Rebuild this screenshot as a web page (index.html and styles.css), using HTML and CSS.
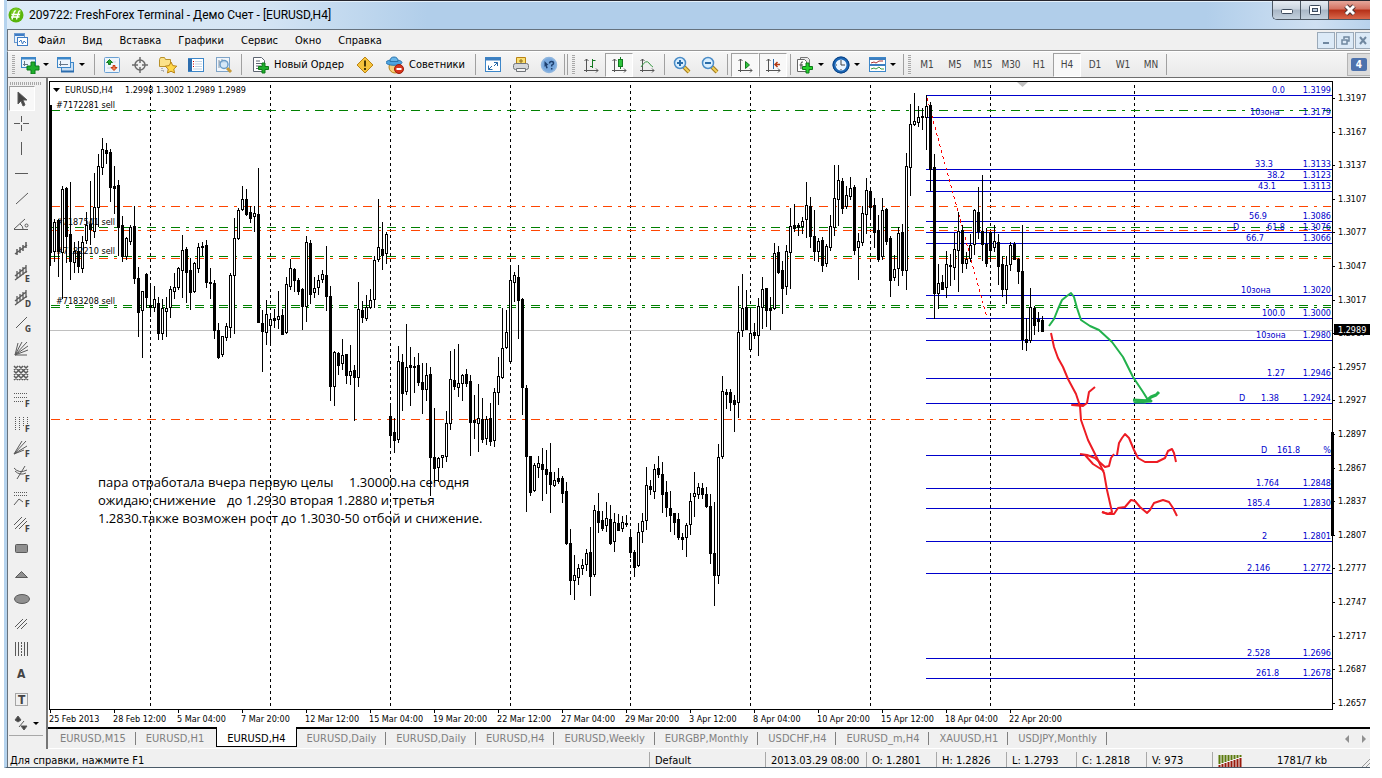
FILE: index.html
```html
<!DOCTYPE html>
<html lang="ru">
<head>
    <meta charset="UTF-8">
    <meta name="viewport" content="width=device-width, initial-scale=1.0">
    <title>FreshForex Terminal</title>
    <link rel="stylesheet" href="styles.css">
</head>
<body>
<div class="window">
    <header class="titlebar">
        <svg class="logo" width="16" height="16" viewBox="0 0 16 16"><circle cx="8" cy="8" r="7.5" fill="#58b50c"/><circle cx="8" cy="6" r="5" fill="#8bd62f" opacity=".6"/><path d="M4 12.500l2-7q.5-2 2-1.500M8.500 12.500l2-7q.5-2 2-1.500M3.500 7.500h8.500M3 10h8.500" stroke="#fff" stroke-width="1.300" fill="none"/></svg>
        <span class="title">209722: FreshForex Terminal - Демо Счет - [EURUSD,H4]</span>
        <div class="win-buttons">
            <button class="win-btn" aria-label="Свернуть"><svg width="14" height="12"><rect x="1.500" y="5.500" width="11" height="4" rx="1" fill="#fff" stroke="#3d4a5c"/></svg></button>
            <button class="win-btn" aria-label="Развернуть"><svg width="14" height="12"><rect x="1.500" y="1.500" width="11" height="9" rx="1" fill="#fff" stroke="#3d4a5c"/><rect x="4.500" y="4.500" width="5" height="3" fill="#b8c9dc" stroke="#3d4a5c"/></svg></button>
            <button class="win-btn close" aria-label="Закрыть"><svg width="14" height="12"><path d="M3 2l8 8M11 2l-8 8" stroke="#4b3535" stroke-width="5"/><path d="M3 2l8 8M11 2l-8 8" stroke="#fff" stroke-width="3"/></svg></button>
        </div>
    </header>

    <nav class="menubar">
        <svg width="16" height="16" viewBox="0 0 16 16"><rect x="1.500" y="1.500" width="10" height="9" fill="#e8f2fb" stroke="#6c9bd0"/><path d="M2 3h9" stroke="#3f7cc4" stroke-width="2"/><rect x="4.500" y="5.500" width="10" height="8" fill="#fff" stroke="#3f7cc4"/><path d="M6 10l2-2 1.500 4 1.500-3 2 2" stroke="#3f7cc4" fill="none"/></svg>
        <button>Файл</button>
        <button>Вид</button>
        <button>Вставка</button>
        <button>Графики</button>
        <button>Сервис</button>
        <button>Окно</button>
        <button>Справка</button>
        <div class="mdi-buttons">
            <button aria-label="Свернуть окно"><svg width="11" height="11"><path d="M2 8h6" stroke="#7088a0" stroke-width="2"/></svg></button>
            <button aria-label="Восстановить окно"><svg width="11" height="11"><path d="M4 4V2h5v4H7M2 5h5v4H2z" stroke="#7088a0" stroke-width="1.500" fill="none"/></svg></button>
            <button aria-label="Закрыть окно"><svg width="11" height="11"><path d="M2 2l6 7M8 2l-6 7" stroke="#7088a0" stroke-width="2"/></svg></button>
        </div>
    </nav>

    <div class="toolbar">
        <i class="grip"></i>
        <button class="split" aria-label="Новый график"><svg width="20" height="18"><rect x="1.500" y="1.500" width="14" height="10" fill="#eef6fd" stroke="#3d87c9"/><path d="M1 2.500h15" stroke="#3d87c9" stroke-width="2"/><path d="M4.500 5v5M3 8.500h5" stroke="#67788a" fill="none"/><path d="M11 6h4v4h4v4h-4v4h-4v-4H7v-4h4z" fill="#1fae2c" stroke="#0d7a18"/></svg></button>
        <button class="split" aria-label="Профили"><svg width="20" height="18"><rect x="5.500" y="6.500" width="12" height="9" fill="#c9dff3" stroke="#3d87c9"/><path d="M5 15.500h13" stroke="#2d6dae" stroke-width="2"/><rect x="1.500" y="1.500" width="13" height="10" fill="#eef6fd" stroke="#3d87c9"/><path d="M1 2.500h14" stroke="#3d87c9" stroke-width="2"/><path d="M4.500 5v5M3 8.500h9" stroke="#67788a"/></svg></button>
        <i class="sep"></i>
        <button aria-label="Обзор рынка"><svg width="16" height="16"><rect x=".5" y=".5" width="15" height="15" rx="1" fill="#eef5fb" stroke="#6aa0d4"/><path d="M3 5h9M3 11h10" stroke="#c8d8e8"/><path d="M2.500 5.500L5.500 2.500 8.500 5.500h-2v2h-2v-2z" fill="#22aa33" stroke="#137a20"/><path d="M7 10.500L10 13.500 13 10.500h-2V8.500H9v2z" fill="#f08050" stroke="#c43a12"/></svg></button>
        <button aria-label="Окно данных"><svg width="16" height="16"><circle cx="8" cy="8" r="5" fill="none" stroke="#6c6c6c" stroke-width="1.500"/><path d="M8 0v6M8 10v6M0 8h6M10 8h6" stroke="#6c6c6c" stroke-width="1.500"/></svg></button>
        <button aria-label="Навигатор"><svg width="20" height="18"><path d="M1.500 3.500l1-2h4l1 2h5v7h-11z" fill="#fbe28a" stroke="#b8912a"/><path d="M4 12v3h3" stroke="#777" stroke-dasharray="1 1" fill="none"/><path d="M13 6l1.800 3.600 4 .6-3 2.800.7 4-3.500-1.800L9.500 17l.7-4-3-2.800 4-.6z" fill="#ffd84a" stroke="#b98314"/></svg></button>
        <button aria-label="Терминал"><svg width="16" height="16"><rect x=".5" y="1.500" width="15" height="13" fill="#fff" stroke="#3d87c9"/><path d="M2 2v12" stroke="#2d6dae" stroke-width="4"/><path d="M5 4.500h1M5 7h1M5 9.500h1" stroke="#c00"/><path d="M7 4.500h7M7 7h7M7 9.500h7M5 12h9" stroke="#c3d3e4"/></svg></button>
        <button aria-label="Тестер стратегий"><svg width="18" height="18"><rect x="1.500" y="1.500" width="13" height="14" fill="#f1f6fb" stroke="#7fa4c8"/><path d="M4 4v8M4 6h9M7 3v4" stroke="#8897a6" fill="none"/><path d="M12 12l4 4" stroke="#c79a3a" stroke-width="3"/><circle cx="9" cy="8.500" r="4" fill="#cfe5f8" fill-opacity=".8" stroke="#6b9cc8" stroke-width="1.500"/></svg></button>
        <i class="sep"></i>
        <button class="labelled"><svg width="17" height="18"><path d="M1.500 1.500h8l3 3v11h-11z" fill="#fff" stroke="#5c6470"/><path d="M4 5h4M4 7.500h6M4 10h5M4 12.500h3" stroke="#5c6470"/><path d="M10 7h3v3.500h3.500v3H13V17h-3v-3.500H6.500v-3H10z" fill="#1fae2c" stroke="#0d7a18"/></svg>Новый Ордер</button>
        <button aria-label="MetaEditor"><svg width="18" height="18"><path d="M9 1l8 8-8 8-8-8z" fill="#f6c33c" stroke="#b98314" stroke-linejoin="round"/><path d="M9 4.500v6M9 12v2" stroke="#4b3905" stroke-width="2"/></svg></button>
        <button class="labelled"><svg width="18" height="18"><ellipse cx="9" cy="11" rx="6" ry="6" fill="#f6cf7a" stroke="#b98314"/><ellipse cx="8" cy="6.500" rx="8" ry="2.800" fill="#4ea3df" stroke="#2a74ad"/><path d="M4 5.500q0-4.500 4-4.500t4 4.500z" fill="#68b6ea" stroke="#2a74ad"/><circle cx="13" cy="13" r="4.500" fill="#d8341c" stroke="#9c1f0d"/><path d="M10.500 13h5" stroke="#fff" stroke-width="2"/></svg>Советники</button>
        <i class="sep"></i>
        <button aria-label="Во весь экран"><svg width="16" height="15"><rect x=".5" y=".5" width="15" height="14" fill="#fff" stroke="#3d87c9"/><path d="M0 2h16" stroke="#3d7fc0" stroke-width="3"/><path d="M9 5.500h3.500v3.500M12.500 5.500L9 9M3.500 8.500v4h4M3.500 12.500L7 9" stroke="#2869a8" fill="none"/></svg></button>
        <button aria-label="Печать"><svg width="18" height="17"><path d="M4.500 8V1.500h9V8" fill="#fbe072" stroke="#b98314"/><path d="M9 3v4M7 5h4" stroke="#8a6a1a"/><rect x="1.500" y="7.500" width="15" height="6" rx="2" fill="#d5d7da" stroke="#707479"/><path d="M4.500 12.500h9v3h-9z" fill="#f3f3f3" stroke="#707479"/></svg></button>
        <button aria-label="Помощь"><svg width="18" height="18"><circle cx="9" cy="9" r="7.500" fill="#78a8dd" stroke="#8fb6df" stroke-width="1.500"/><path d="M4.500 5l4 4-1.700.2 1 2.800-1.500.5-1-2.700L4.500 11z" fill="#1d3f6e"/><path d="M9.500 7.500q0-2 2-2t2 1.700q0 1.300-1.800 2v1.300M11.700 12v1.500" stroke="#1d3f6e" stroke-width="1.500" fill="none"/></svg></button>
        <i class="sep tight"></i><i class="sep tight"></i>
        <i class="grip"></i>
        <button aria-label="Бары"><svg width="16" height="16"><path d="M3.500 2v13M1 13.500h14M1.500 4l2-2 2 2M13 11.500l2 2-2 2" stroke="#555" fill="none"/><path d="M9.500 2v9M9.500 3.500h3M7 9.500h2" stroke="#137a20" fill="none"/></svg></button>
        <button class="pressed" aria-label="Японские свечи"><svg width="16" height="16"><path d="M3.500 2v13M1 13.500h14M1.500 4l2-2 2 2M13 11.500l2 2-2 2" stroke="#555" fill="none"/><path d="M9.500 0v12" stroke="#137a20"/><rect x="7.500" y="2.500" width="4" height="7" fill="#2fc43d" stroke="#137a20"/></svg></button>
        <button aria-label="Линия"><svg width="16" height="16"><path d="M3.500 2v13M1 13.500h14M1.500 4l2-2 2 2M13 11.500l2 2-2 2" stroke="#555" fill="none"/><path d="M2 10q5-8 8-4t4 4" stroke="#3a9a45" fill="none"/></svg></button>
        <i class="sep"></i>
        <button aria-label="Увеличить"><svg width="18" height="18"><path d="M11 11l5 5" stroke="#a37b1c" stroke-width="4"/><path d="M11 11l5 5" stroke="#f0cf58" stroke-width="2"/><circle cx="7" cy="7" r="5.500" fill="#d9efff" stroke="#4a8cc7" stroke-width="1.500"/><path d="M4 7h6M7 4v6" stroke="#2a6da9" stroke-width="2"/></svg></button>
        <button aria-label="Уменьшить"><svg width="18" height="18"><path d="M11 11l5 5" stroke="#a37b1c" stroke-width="4"/><path d="M11 11l5 5" stroke="#f0cf58" stroke-width="2"/><circle cx="7" cy="7" r="5.500" fill="#d9efff" stroke="#4a8cc7" stroke-width="1.500"/><path d="M4 7h6" stroke="#2a6da9" stroke-width="2"/></svg></button>
        <i class="sep"></i>
        <button class="pressed" aria-label="Автопрокрутка"><svg width="16" height="16"><path d="M3.500 2v13M1 13.500h14M1.500 4l2-2 2 2M13 11.500l2 2-2 2" stroke="#555" fill="none"/><path d="M8.500 4.500v7l4-3.500z" fill="#2fc43d" stroke="#137a20"/></svg></button>
        <button class="pressed" aria-label="Сдвиг графика"><svg width="16" height="16"><path d="M3.500 2v13M1 13.500h14M1.500 4l2-2 2 2M13 11.500l2 2-2 2" stroke="#555" fill="none"/><path d="M8.500 2v10" stroke="#2869a8"/><path d="M15 7.500H10M12.500 5L10 7.500l2.500 2.500" stroke="#b33a12" stroke-width="1.500" fill="none"/></svg></button>
        <i class="sep"></i>
        <button class="split" aria-label="Индикаторы"><svg width="20" height="18"><path d="M5.500 1.500h7l2 2v11h-9z" fill="#e9e9e9" stroke="#777"/><path d="M2.500 3.500h7l2 2v10h-9z" fill="#fff" stroke="#666"/><path d="M8 6q-2-.5-2 1.500V13M4.500 9H8" stroke="#444" fill="none"/><path d="M11 7h3v3.500h3.500v3H14V17h-3v-3.500H7.500v-3H11z" fill="#25d02c" stroke="#0d7a18"/></svg></button>
        <button class="split" aria-label="Периоды"><svg width="20" height="18"><circle cx="10" cy="9" r="7" fill="#eaf5ff" stroke="#1b66b5" stroke-width="3"/><circle cx="10" cy="9" r="8" fill="none" stroke="#0d4384"/><path d="M10 4v5h4M10 13v1M5 9h1" stroke="#444" fill="none"/></svg></button>
        <button class="split" aria-label="Шаблоны"><svg width="20" height="15"><rect x="2.500" y=".5" width="16" height="14" fill="#fff" stroke="#3d87c9"/><path d="M2 2h17M3 8h15" stroke="#3d7fc0" stroke-width="2"/><path d="M4 6l3-1 2 1 3-2 4 0" stroke="#a33" fill="none"/><path d="M4 12l3-1 2 1 3-2 2 2h3" stroke="#3a9a45" fill="none"/></svg></button>
        <i class="sep tight"></i>
        <i class="grip"></i>
        <button class="period">M1</button>
        <button class="period">M5</button>
        <button class="period">M15</button>
        <button class="period">M30</button>
        <button class="period">H1</button>
        <button class="period pressed">H4</button>
        <button class="period">D1</button>
        <button class="period">W1</button>
        <button class="period">MN</button>
        <i class="sep tight"></i>
        <button class="messages"><span>4</span></button>
    </div>

    <div class="main">
        <aside class="tools" id="tools"><i class="grip-h"></i></aside>
        <div class="workspace">
            <svg class="chart" id="chart" viewBox="48 78 1322 649"></svg>
            <div class="tabs">
                <button class="tab">EURUSD,M15</button>
                <button class="tab">EURUSD,H1</button>
                <button class="tab active">EURUSD,H4</button>
                <button class="tab">EURUSD,Daily</button>
                <button class="tab">EURUSD,Daily</button>
                <button class="tab">EURUSD,H4</button>
                <button class="tab">EURUSD,Weekly</button>
                <button class="tab">EURGBP,Monthly</button>
                <button class="tab">USDCHF,H4</button>
                <button class="tab">EURUSD_m,H4</button>
                <button class="tab">XAUUSD,H1</button>
                <button class="tab">USDJPY,Monthly</button>
                <div class="tab-scroll">
                    <button aria-label="Назад"><svg width="4" height="8"><path d="M4 0v8L0 4z" fill="#909090"/></svg></button>
                    <button aria-label="Вперед"><svg width="4" height="8"><path d="M0 0v8l4-4z" fill="#909090"/></svg></button>
                </div>
            </div>
        </div>
    </div>

    <footer class="status">
        <span class="help">Для справки, нажмите F1</span>
        <span class="cell profile">Default</span>
        <span class="cell date">2013.03.29 08:00</span>
        <span class="cell">O: 1.2801</span>
        <span class="cell">H: 1.2826</span>
        <span class="cell">L: 1.2793</span>
        <span class="cell">C: 1.2818</span>
        <span class="cell volume">V: 973</span>
        <span class="cell traffic">
            <svg width="24" height="12"><path d="M1.500 0v9M4.500 0v8M7.500 0v7M10.500 0v6M13.500 0v5M16.500 0v4M19.500 0v3M22.500 0v2" stroke="#5a7a0c" stroke-width="2"/><path d="M1.500 12v-2M4.500 12V9M7.500 12V8M10.500 12V7M13.500 12V6M16.500 12V5M19.500 12V4M22.500 12V3" stroke="#9a1a0c" stroke-width="2"/></svg>
            <span>1781/7 kb</span>
            <svg width="8" height="10"><path d="M0 10l8-8M4 10l4-4" stroke="#999"/></svg>
        </span>
    </footer>
</div>
<script src="script.js"></script>
</body>
</html>
```
FILE: styles.css
```css
* {
    box-sizing: border-box;
}
body {
    margin: 0;
    background: #fff;
    font-family: "DejaVu Sans Condensed", "Noto Sans", sans-serif;
    font-size: 11px;
    color: #000;
}
button {
    font: inherit;
    color: inherit;
    background: none;
    border: 0;
    padding: 0;
    display: flex;
    align-items: center;
    justify-content: center;
}
.window {
    margin: 0 12px 10px 4px;
    border-left: 3px solid #b5d3ee;
    background: #f0f0f0;
    border-bottom: 1px solid #4a5a68;
    overflow: hidden;
}

/* title */
.titlebar {
    height: 30px;
    display: flex;
    align-items: center;
    gap: 5px;
    border-top: 1px solid #26262e;
    border-bottom: 1px solid #66727e;
    box-shadow: inset 0 1px #e4f0fa;
    background: linear-gradient(90deg, #dcebf8 0, #d5e5f4 250px, #b1ceea 420px, #b1ceea 88%, #cfe0f2 96%, #b8d2ec);
}
.logo {
    margin-left: 1px;
}
.title {
    font-family: Roboto, "Noto Sans", sans-serif;
    font-size: 12px;
}
.win-buttons {
    margin-left: auto;
    align-self: flex-start;
    display: flex;
    border: 1px solid #4c5763;
    border-top: 0;
    border-right: 0;
    border-radius: 0 0 0 5px;
    overflow: hidden;
}
.win-btn {
    width: 28px;
    height: 18px;
    border-right: 1px solid #4c5763;
    background: linear-gradient(#e6ecf3 0, #c9d3de 45%, #a9b7c6 50%, #c3d0dd);
}
.win-btn.close {
    width: 41px;
    border-right: 0;
    background: linear-gradient(#e5a79b 0, #d3705f 45%, #b52f17 50%, #d9674a);
}

/* menu */
.menubar {
    height: 21px;
    display: flex;
    align-items: center;
    gap: 17px;
    padding-left: 5px;
    border-left: 1px solid #66727e;
    border-bottom: 1px solid #989898;
}
.menubar > svg {
    margin-right: -8px;
}
.mdi-buttons {
    margin-left: auto;
    display: flex;
    gap: 1px;
}
.mdi-buttons button {
    width: 18px;
    height: 17px;
    background: #dceaf7;
    border: 1px solid #9aa9b8;
}
.mdi-buttons button:last-child {
    width: 15px;
    border-right: 0;
}

/* toolbar */
.toolbar {
    height: 27px;
    display: flex;
    align-items: center;
    border-left: 1px solid #66727e;
    border-top: 1px solid #fff;
    border-bottom: 1px solid #6f6f6f;
    background: linear-gradient(#f6f6f6, #e9e9e9);
}
.toolbar button {
    width: 28px;
    height: 24px;
    flex: none;
}
.toolbar .split {
    width: 36px;
    justify-content: flex-start;
    padding-left: 1px;
    gap: 3px;
}
.toolbar .split::after {
    content: "";
    border: 3px solid transparent;
    border-top-color: #000;
    border-bottom: 0;
}
.toolbar .labelled {
    width: auto;
    padding: 0 7px;
    gap: 5px;
}
.toolbar .period {
    color: #444;
    font-size: 10px;
}
.toolbar .pressed,
.tools .pressed {
    background: #f8f8f8;
    border: 1px solid #a0a0a0;
    border-right-color: #fff;
    border-bottom-color: #fff;
}
.toolbar .messages {
    width: 23px;
    height: 23px;
    margin-left: auto;
    background: #dcdcdc;
    border: 1px solid #b4b4b4;
    border-right: 0;
}
.messages span {
    width: 16px;
    height: 13px;
    line-height: 13px;
    background: #4d72ad;
    color: #fff;
    font-weight: bold;
    font-size: 10px;
    border-radius: 2px;
}
.grip {
    width: 3px;
    height: 20px;
    margin: 0 2px 0 3px;
    background: repeating-linear-gradient(#a8a8a8 0 1px, #f0f0f0 1px 2px);
}
.toolbar > .grip:first-child {
    margin: 0 4px;
}
.sep {
    width: 1px;
    height: 21px;
    margin: 0 3px;
    background: #a0a0a0;
}
.sep.tight {
    margin: 0 1px;
}

/* left tools */
.main {
    display: flex;
    border-left: 1px solid #66727e;
}
.tools {
    flex: none;
    width: 40px;
    border-right: 2px solid #767676;
    padding-top: 4px;
}
.grip-h {
    display: block;
    width: 32px;
    height: 3px;
    margin: 0 0 1px 2px;
    background: repeating-linear-gradient(90deg, #a8a8a8 0 1px, #f0f0f0 1px 2px);
}
.tools button {
    width: 26px;
    height: 25px;
    margin-left: 1px;
}
.tools svg {
    stroke: #5a5a5a;
    fill: none;
}
.tools text {
    fill: #444;
    stroke: none;
    font-size: 8px;
    font-weight: bold;
}
.tools .letter {
    font-size: 12px;
}
.tools .wide {
    width: 34px;
    justify-content: flex-start;
    gap: 2px;
    padding-left: 4px;
    border-bottom: 1px solid #a8a8a8;
}
.tools .wide::after {
    content: "";
    border: 3px solid transparent;
    border-top-color: #000;
    border-bottom: 0;
}

/* chart */
.workspace {
    flex: 1;
    min-width: 0;
}
.chart {
    display: block;
    width: 100%;
    height: auto;
    background: #fff;
    font-size: 9px;
}
.crisp {
    shape-rendering: crispEdges;
}
.level-text {
    fill: #0000cc;
}
.note {
    font-family: "Open Sans", "Noto Sans", sans-serif;
    font-size: 13px;
}

/* tabs */
.tabs {
    height: 22px;
    display: flex;
    align-items: center;
    padding-left: 2px;
    border-top: 2px solid #000;
    border-bottom: 1px solid #fff;
}
.tab {
    height: 13px;
    padding: 0 9px 0 10px;
    color: #808080;
    border-right: 1px solid #808080;
    white-space: nowrap;
}
.tab:nth-child(2) {
    padding-right: 12px;
    border-right: 0;
}
.tab.active {
    height: 20px;
    align-self: flex-start;
    margin-top: -2px;
    padding: 3px 10px 0;
    color: #000;
    background: #fff;
    border: 1px solid #000;
    border-top: 0;
}
.tab-scroll {
    margin-left: auto;
    display: flex;
    gap: 13px;
    padding-right: 4px;
}

/* status bar */
.status {
    height: 18px;
    padding: 3px 0 0 2px;
    display: flex;
    border-left: 1px solid #66727e;
    line-height: 18px;
}
.help {
    flex: 1;
}
.cell {
    width: 70px;
    padding-left: 5px;
    border-left: 1px solid #a8a8a8;
    white-space: nowrap;
}
.cell.profile {
    width: 116px;
}
.cell.date {
    width: 101px;
}
.cell.volume {
    width: 66px;
}
.cell.traffic {
    width: 158px;
    display: flex;
    justify-content: space-between;
}
.traffic svg {
    align-self: flex-end;
}
```
FILE: script.js
```js
// candle = [high, open, close, low] on the chart's y scale (grows downwards)
const candles = [
    [105,105,252,265],[219,251,222,261],[219,220,251,276],[186,252,189,298],[187,188,236,262],[182,234,261,279],[242,262,251,272],[241,251,266,272],
    [236,268,242,272],[212,240,225,243],[181,224,229,244],[173,231,207,237],[154,207,166,226],[138,167,149,174],[143,150,153,163],[149,152,187,201],
    [166,186,188,213],[180,185,227,255],[216,225,256,261],[237,256,238,259],[225,241,227,244],[206,226,278,283],[267,278,312,336],[291,310,291,357],
    [273,274,297,307],[284,305,307,316],[286,307,299,311],[297,303,333,339],[299,333,308,339],[297,311,308,336],[286,307,289,317],[273,291,287,298],
    [267,287,268,289],[235,270,250,297],[247,249,272,302],[258,270,292,309],[262,291,263,292],[243,268,247,272],[242,246,247,255],[240,245,282,287],
    [268,282,283,298],[280,283,330,338],[323,330,357,358],[336,354,336,356],[323,337,326,340],[273,327,275,337],[218,275,238,333],[208,238,210,239],
    [186,209,199,210],[189,199,214,215],[206,212,218,222],[206,216,213,231],[168,214,322,322],[310,323,331,371],[300,332,314,344],[314,325,319,343],
    [309,318,320,327],[291,319,316,328],[309,315,334,334],[277,332,284,333],[259,286,268,289],[268,269,280,291],[278,280,291,294],[288,289,306,329],
    [236,306,242,321],[240,243,294,303],[277,292,288,297],[275,287,280,294],[270,279,274,282],[246,275,296,310],[286,296,386,400],[351,386,352,405],
    [352,353,365,374],[339,363,355,369],[354,354,375,383],[345,375,371,384],[365,370,377,420],[282,377,309,386],[301,310,317,322],[295,318,307,320],
    [289,307,300,308],[256,299,260,307],[199,259,247,261],[222,249,255,269],[232,253,234,263],[406,416,435,444],[418,432,440,452],[346,439,361,442],
    [354,362,393,410],[324,391,367,394],[347,365,367,405],[357,366,367,392],[353,365,382,385],[363,382,389,413],[363,389,375,400],[367,374,457,495],
    [408,457,468,482],[457,467,458,481],[455,457,455,467],[411,456,423,461],[351,423,379,429],[349,380,386,389],[344,387,383,396],[374,383,375,400],
    [369,374,383,386],[375,381,422,455],[395,420,422,438],[384,423,418,451],[398,419,439,442],[416,438,419,444],[403,418,441,445],[388,440,392,446],
    [357,392,376,404],[308,377,348,378],[310,347,332,348],[265,361,280,361],[272,282,275,301],[265,277,300,338],[298,299,387,414],[385,388,456,511],
    [456,456,492,495],[463,490,465,491],[456,467,463,477],[448,464,469,500],[450,469,474,493],[443,472,484,512],[472,485,480,486],[468,478,481,483],
    [476,478,493,502],[482,491,543,544],[529,543,580,594],[555,580,575,599],[564,577,568,584],[559,568,565,574],[549,564,553,570],[527,552,576,595],
    [505,574,510,576],[493,511,522,532],[511,520,528,530],[502,525,518,531],[505,519,543,544],[513,541,522,551],[514,523,530,530],[516,528,522,531],
    [515,523,524,526],[529,537,552,557],[550,552,567,576],[523,565,532,566],[513,531,521,542],[467,520,485,529],[480,486,489,494],[464,491,469,498],
    [456,468,474,477],[462,474,494,512],[481,492,507,516],[491,508,515,531],[513,513,522,534],[513,519,537,539],[533,537,539,549],[523,537,525,556],
    [493,524,501,534],[472,496,493,516],[483,494,487,498],[483,488,494,498],[487,494,506,507],[494,506,553,563],[502,553,575,605],[444,575,457,583],
    [376,456,391,458],[389,392,394,408],[389,392,402,410],[395,400,404,431],[286,402,332,417],[274,330,308,336],[290,307,329,329],[309,349,333,350],
    [323,332,335,338],[298,335,306,355],[277,307,289,328],[288,288,310,326],[297,308,310,329],[243,308,253,309],[246,252,272,273],[261,270,288,313],
    [245,286,251,294],[208,252,226,288],[204,225,228,231],[223,225,227,235],[217,226,221,233],[182,219,205,237],[197,206,236,247],[210,236,251,260],
    [238,251,241,261],[237,240,265,271],[244,263,246,266],[215,247,226,250],[165,227,198,235],[165,199,180,225],[178,181,208,213],[186,206,195,208],
    [177,196,188,199],[185,187,250,254],[233,247,241,279],[206,242,213,245],[178,214,190,233],[190,191,207,216],[198,205,232,247],[215,230,259,261],
    [198,256,210,259],[208,209,241,244],[236,238,280,296],[255,277,269,280],[227,268,233,285],[224,232,270,275],[153,270,166,289],[104,167,124,195],
    [93,124,121,125],[106,122,117,126],[108,116,117,129],[95,117,106,149],[102,105,169,190],[154,167,293,318],[264,293,283,308],[275,282,289,289],
    [251,287,264,297],[254,265,266,285],[233,267,249,279],[212,250,231,291],[225,230,263,272],[252,263,259,268],[234,258,245,261],[209,244,210,254],
    [187,212,231,238],[175,231,244,260],[228,244,263,266],[231,232,250,260],[225,247,241,251],[234,242,266,284],[256,264,289,296],[256,289,265,303],
    [242,264,245,270],[242,244,259,259],[258,259,271,283],[225,271,339,349],[318,339,342,350],[288,340,307,342],[306,308,325,334],[312,319,321,331],
    [316,320,331,331]
];

// y, price, then pairs of x and text
const levels = [
    [95, '1.3199', 1272, '0.0'], [117, '1.3179', 1250, '10зона'], [169, '1.3133', 1255, '33.3'],
    [180, '1.3123', 1267, '38.2'], [191, '1.3113', 1258, '43.1'], [221, '1.3086', 1249, '56.9'],
    [232, '1.3076', 1233, 'D', 1267, '61.8'], [243, '1.3066', 1246, '66.7'], [295, '1.3020', 1241, '10зона'],
    [318, '1.3000', 1262, '100.0'], [340, '1.2980', 1256, '10зона'], [378, '1.2946', 1267, '1.27'],
    [403, '1.2924', 1239, 'D', 1261, '1.38'], [455, '%', 1261, 'D', 1277, '161.8'], [488, '1.2848', 1256, '1.764'],
    [508, '1.2830', 1247, '185.4'], [541, '1.2801', 1262, '2'], [573, '1.2772', 1247, '2.146'],
    [658, '1.2696', 1247, '2.528'], [678, '1.2678', 1256, '261.8']
];

const dates = ['25 Feb 2013', '28 Feb 12:00', '5 Mar 04:00', '7 Mar 20:00', '12 Mar 12:00', '15 Mar 04:00',
    '19 Mar 20:00', '22 Mar 12:00', '27 Mar 04:00', '29 Mar 20:00', '3 Apr 12:00', '8 Apr 04:00',
    '10 Apr 20:00', '15 Apr 12:00', '18 Apr 04:00', '22 Apr 20:00'];

const LEFT = 50, RIGHT = 1332, TOP = 82, BOTTOM = 709;

function rect(x, y, w, h, fill) {
    return `<rect x="${x}" y="${y}" width="${w}" height="${h}" fill="${fill}"/>`;
}
function line(x1, y1, x2, y2, color, dash) {
    return `<path d="M${x1} ${y1}L${x2} ${y2}" stroke="${color}" stroke-dasharray="${dash || 'none'}"/>`;
}
function text(x, y, str, attrs) {
    return `<text x="${x}" y="${y}" ${attrs || ''}>${str}</text>`;
}

let shapes = '';
let labels = '';

// day separators
[150, 270, 390, 510, 630, 750, 870, 990, 1134].forEach(x => {
    shapes += line(x + 0.5, TOP + 3, x + 0.5, BOTTOM, '#000', '3 3');
});

shapes += rect(LEFT, 330, RIGHT - LEFT, 1, '#c0c0c0');

levels.forEach(([y, price, ...parts]) => {
    shapes += rect(926, y, RIGHT - 926, 1, '#0000cc');
    labels += text(1331, y - 2, price, 'class="level-text" text-anchor="end"');
    for (let i = 0; i < parts.length; i += 2) {
        labels += text(parts[i], y - 2, parts[i + 1], 'class="level-text"');
    }
});

// order, stop and profit lines
[110, 227, 256, 305, 307].forEach(y => {
    shapes += line(51, y + 0.5, RIGHT - 1, y + 0.5, '#008000', '9 6 3 6');
});
[206, 230, 258, 419].forEach(y => {
    shapes += line(51, y + 0.5, RIGHT - 1, y + 0.5, '#ff4500', '9 6 3 6');
});
[[108, '#7172281 sell'], [225, '#7187541 sell'], [254, '#7182210 sell'], [304, '#7183208 sell']].forEach(([y, str]) => {
    labels += text(56, y, str);
});

shapes += line(927, 98, 987, 318, '#ff0000', '3 3');

candles.forEach(([high, open, close, low], i) => {
    const x = LEFT + i * 4;
    const top = Math.min(open, close);
    const height = Math.abs(open - close) + 1;
    shapes += rect(x, high, 1, low - high + 1, '#000');
    shapes += rect(x - 1, top, 3, height, '#000');
    if (close < open && height > 2) {
        shapes += rect(x, top + 1, 1, height - 2, '#fff');
    }
});

// frame, price scale and time scale
shapes += rect(49, 81, RIGHT - 48, 1, '#000') + rect(49, 81, 1, 629, '#000');
shapes += rect(49, BOTTOM, RIGHT - 48, 1, '#000') + rect(RIGHT, 81, 1, 629, '#000');
shapes += rect(RIGHT - 1, 432, 3, 104, '#000');
for (let i = 0; i < 19; i++) {
    const y = Math.round(98 + i * 33.6);
    shapes += rect(RIGHT + 1, y, 2, 1, '#000');
    labels += text(1338, y + 3, (1.3197 - i * 0.003).toFixed(4));
}
dates.forEach((str, i) => {
    shapes += rect(LEFT + i * 64, BOTTOM, 1, 4, '#000');
    labels += text(LEFT - 1 + i * 64, 722, str);
});
// current bid covers the scale label under it
labels += rect(RIGHT + 2, 324, 36, 11, '#000');
labels += text(1338, 333, '1.2989', 'fill="#fff"');

labels += '<path d="M53 88h7l-3.500 4z"/><path d="M1017 82h11l-5.500 5z" fill="#c0c0c0"/>';
labels += text(65, 93, 'EURUSD,H4') + text(125, 93, '1.2998 1.3002 1.2989 1.2989');
labels += text(98, 487, 'пара отработала вчера первую целы', 'class="note"') + text(349, 487, '1.30000.на сегодня', 'class="note"');
labels += text(98, 505, 'ожидаю снижение', 'class="note"') + text(227, 505, 'до 1.2930 вторая 1.2880 и третья', 'class="note"');
labels += text(98, 523, '1.2830.также возможен рост до 1.3030-50 отбой и снижение.', 'class="note"');

// hand drawn forecast
const forecast = `
    <g fill="none" stroke-width="2" stroke-linejoin="round">
        <path stroke="#22b14c" d="M1049 326l5-7 4-10 4-9 5-4 4-3 3 4 3 11 4 12 9 6 9 4 13 12 11 15 10 20 10 15 5 8"/>
        <path stroke="#22b14c" stroke-width="3" d="M1133 400l18 1-16 1h10l6-5 5-2 3-3"/>
        <path stroke="#ed1c24" d="M1051 333l3 14 4 11 5 9 5 12 8 15 4 12 1 14 7 20 10 20 6 13 3 17 5 22-4 2-6-2"/>
        <path stroke="#ed1c24" d="M1095 387l-6 5-2 11-4 3-11-1h12"/>
        <path stroke="#ed1c24" d="M1080 454l7 1 8 3 10 9 4-1 2-8 3-4M1085 455l8 9 11 7M1117 455l2-12 3-5 3-4 4 4 5 12 4 8 7 4h12l8-4 3-7 4-2 2 4 2 9"/>
        <path stroke="#ed1c24" d="M1102 512l6 2h6l4-6 7-1 6-7 4 1 5 6 7 6 3-3 4-7 9-3 6 2 4 6 4 8"/>
    </g>`;

document.querySelector('#chart').innerHTML = `<g class="crisp">${shapes}</g>${forecast}<g>${labels}</g>`;

// drawing tools of the left panel
const f = '<text x="12" y="17">F</text>';
const tools = [
    ['Курсор', '<path d="M5 2v12l3-3 2 5 2-1-2-5h4z" fill="#444"/>'],
    ['Перекрестие', '<path d="M8.500 1v6M8.500 10v6M1 8.500h6M10 8.500h6"/>'],
    ['Вертикальная линия', '<path d="M8.500 2v13"/>'],
    ['Горизонтальная линия', '<path d="M2 8.500h13"/>'],
    ['Трендовая линия', '<path d="M3 14L15 3"/>'],
    ['Трендовая линия по углу', '<path d="M1 14.500h14M1 14L12 4M7 9q3 2 3 5"/><circle cx="13.500" cy="10.500" r="1.500"/>'],
    ['Линейная регрессия', '<path d="M2 14L14 5M4 9v6M7 7v6M10 5v6M13 2v6" stroke-width="1.500"/>'],
    ['Равноудаленный канал', '<path d="M2 11L13 2M2 15L14 6M4 6v8M7 4v8M10 2v8M13 0v8" stroke-width="1.300"/><text x="12" y="17">E</text>'],
    ['Канал отклонений', '<path d="M2 11L13 2M2 15L14 6M4 6v8M7 4v8M10 2v8M13 0v8" stroke-width="1.300"/><text x="12" y="17">D</text>'],
    ['Линия Ганна', '<path d="M3 13L14 2"/><text x="12" y="17">G</text>'],
    ['Веер Ганна', '<path d="M2 15L5 3M2 15L9 2M2 15L14 2M2 15L15 6M2 15l13-5M2 15h12"/>'],
    ['Сетка Ганна', '<path d="M1 5l4-4M1 10L10 1M1 15L15 1M6 15l9-9M11 15l4-4M15 5l-4-4M15 10L6 1M15 15L1 1M10 15L1 6M5 15l-4-4" stroke-width="1.500"/>'],
    ['Уровни Фибоначчи', '<path d="M1 3.500h13M1 7.500h13M1 11.500h10" stroke-dasharray="1 1"/>' + f],
    ['Временные зоны Фибоначчи', '<path d="M2.500 2v13M6.500 2v13M10.500 2v10M14.500 2v8" stroke-dasharray="1 1"/>' + f],
    ['Веер Фибоначчи', '<path d="M1 14L9 1M1 14L13 1M1 14L14 6M1 14l10-4"/>' + f],
    ['Дуги Фибоначчи', '<path d="M4 14L12 1M1 3q5 6 13 2M2 6q5 5 11 2"/>' + f],
    ['Расширение Фибоначчи', '<path d="M1 2.500h14M1 5.500h14" stroke-dasharray="1 1"/><path d="M1 15l5-6 4 3"/>' + f],
    ['Канал Фибоначчи', '<path d="M1 10L9 2M2 14L13 3M6 14l8-8"/>' + f],
    ['Прямоугольник', '<rect x="2.500" y="4.500" width="12" height="8" rx="1" fill="#909090"/>'],
    ['Треугольник', '<path d="M2.500 12.500h12l-6-6z" fill="#909090"/>'],
    ['Эллипс', '<ellipse cx="9" cy="9" rx="7.500" ry="4.500" fill="#909090"/>'],
    ['Вилы Эндрюса', '<path d="M2 12L10 4M4 14L14 4M8 14l6-6"/>'],
    ['Циклические линии', '<path d="M2.500 2v14M5.500 2v14M11.500 2v14M14.500 2v14"/><path d="M8.500 2v14" stroke-dasharray="2 1"/>'],
    ['Текст', '<text class="letter" x="4" y="13">A</text>'],
    ['Текстовая метка', '<path d="M2.500 3.500h12v12h-12z" stroke-dasharray="1 1"/><text class="letter" x="5" y="14">T</text>'],
    ['Стрелки', '<path d="M2 6l3-4 3 4-3 2zM8 12h6l-3 4z" fill="#444"/><path d="M6 13l5-6"/>']
];
document.querySelector('#tools').insertAdjacentHTML('beforeend', tools.map(([name, icon], i) => {
    const cls = i === 0 ? 'pressed' : i === tools.length - 1 ? 'wide' : '';
    return `<button class="${cls}" aria-label="${name}"><svg width="18" height="18">${icon}</svg></button>`;
}).join(''));
```
